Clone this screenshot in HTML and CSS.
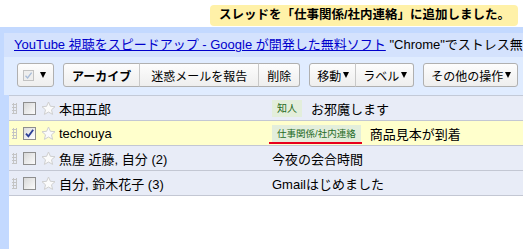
FILE: index.html
```html
<!DOCTYPE html>
<html lang="ja">
<head>
  <meta charset="UTF-8">
  <meta name="viewport" content="width=device-width, initial-scale=1.0">
  <title>Gmail</title>
  <link rel="stylesheet" href="styles.css">
</head>
<body>
  <div class="notice">
    <span class="notice-text">スレッドを「仕事関係/社内連絡」に追加しました。</span>
  </div>

  <div class="main">
    <div class="ad">
      <a href="#">YouTube 視聴をスピードアップ - Google が開発した無料ソフト</a> "Chrome"でストレス無
    </div>

    <div class="toolbar">
      <button class="btn btn-select">
        <span class="mini-check">
          <svg width="9" height="9" viewBox="0 0 9 9"><path d="M1.5 4.8 L3.6 7 L7.6 1.6" fill="none" stroke="#a8bcd8" stroke-width="1.3"/></svg>
        </span>
        <span class="arrow"></span>
      </button>
      <div class="group">
        <button class="btn bold">アーカイブ</button>
        <button class="btn btn-wide">迷惑メールを報告</button>
        <button class="btn">削除</button>
      </div>
      <div class="group">
        <button class="btn btn-menu">移動<span class="arrow"></span></button>
        <button class="btn btn-menu">ラベル<span class="arrow"></span></button>
      </div>
      <div class="group">
        <button class="btn btn-menu">その他の操作<span class="arrow"></span></button>
      </div>
    </div>

    <div class="list">
      <div class="row">
        <span class="grip"></span>
        <span class="check"></span>
        <svg class="star" width="15" height="15" viewBox="0 0 15 15"><path d="M7.5 1 L9.4 5.3 L14 5.7 L10.5 8.8 L11.6 13.4 L7.5 11 L3.4 13.4 L4.5 8.8 L1 5.7 L5.6 5.3 Z" fill="#fbfbfb" stroke="#cfcfcf"/></svg>
        <span class="sender">本田五郎</span>
        <span class="subject"><span class="chip">知人</span>お邪魔します</span>
      </div>
      <div class="row selected">
        <span class="grip"></span>
        <span class="check checked">
          <svg width="11" height="11" viewBox="0 0 11 11"><path d="M2 5.6 L4.4 8.4 L9.2 1.8" fill="none" stroke="#2b3f95" stroke-width="1.8"/></svg>
        </span>
        <svg class="star" width="15" height="15" viewBox="0 0 15 15"><path d="M7.5 1 L9.4 5.3 L14 5.7 L10.5 8.8 L11.6 13.4 L7.5 11 L3.4 13.4 L4.5 8.8 L1 5.7 L5.6 5.3 Z" fill="#fbfbfb" stroke="#cfcfcf"/></svg>
        <span class="sender">techouya</span>
        <span class="subject"><span class="chip chip-small">仕事関係/社内連絡<span class="mark"></span></span>商品見本が到着</span>
      </div>
      <div class="row">
        <span class="grip"></span>
        <span class="check"></span>
        <svg class="star" width="15" height="15" viewBox="0 0 15 15"><path d="M7.5 1 L9.4 5.3 L14 5.7 L10.5 8.8 L11.6 13.4 L7.5 11 L3.4 13.4 L4.5 8.8 L1 5.7 L5.6 5.3 Z" fill="#fbfbfb" stroke="#cfcfcf"/></svg>
        <span class="sender">魚屋 近藤, 自分 (2)</span>
        <span class="subject">今夜の会合時間</span>
      </div>
      <div class="row">
        <span class="grip"></span>
        <span class="check"></span>
        <svg class="star" width="15" height="15" viewBox="0 0 15 15"><path d="M7.5 1 L9.4 5.3 L14 5.7 L10.5 8.8 L11.6 13.4 L7.5 11 L3.4 13.4 L4.5 8.8 L1 5.7 L5.6 5.3 Z" fill="#fbfbfb" stroke="#cfcfcf"/></svg>
        <span class="sender">自分, 鈴木花子 (3)</span>
        <span class="subject">Gmailはじめました</span>
      </div>
    </div>
  </div>
</body>
</html>
```

FILE: styles.css
```css
* {margin: 0; padding: 0; box-sizing: border-box;}

html, body {
  width: 523px;
  height: 249px;
  overflow: hidden;
}
body {
  display: flex;
  flex-direction: column;
  background: #fff;
  font-family: "Liberation Sans", "Noto Sans CJK JP", sans-serif;
  font-size: 13px;
  color: #000;
}

/* 上の黄色いお知らせ */
.notice {
  height: 27px;
  padding: 5px 0 0 210px;
  white-space: nowrap;
}
.notice-text {
  display: inline-block;
  height: 21px;
  line-height: 21px;
  padding: 0 8px 0 9px;
  background: #fff1a8;
  border-radius: 4px;
  font-size: 12.5px;
  font-weight: bold;
}

.main {
  flex: 1;
  display: flex;
  flex-direction: column;
  background: #c3d9ff;
  padding-top: 6px;
}

.ad {
  height: 24px;
  line-height: 24px;
  margin-left: 4px;
  padding-left: 10px;
  background: #d4e2fd;
  font-size: 13px;
  white-space: nowrap;
}
.ad a {
  color: #0000cc;
}

/* ボタン */
.toolbar {
  display: flex;
  gap: 9px;
  height: 38px;
  margin-left: 4px;
  padding: 6px 0 0 13px;
  background: #e0ecff;
  white-space: nowrap;
}
.group {
  display: flex;
  flex-shrink: 0;
}
.btn {
  display: flex;
  align-items: center;
  flex-shrink: 0;
  height: 24px;
  padding: 0 8px;
  border: 1px solid #b0b0b0;
  border-radius: 3px;
  background: linear-gradient(#fdfdfd, #eeeeee);
  font-family: inherit;
  font-size: 12px;
  color: #000;
}
.btn-wide {
  padding: 0 11px;
}
.btn-menu {
  padding: 0 6px 0 7px;
}
.group .btn {
  border-radius: 0;
}
.group .btn + .btn {
  border-left: 1px solid #c8c8c8;
  margin-left: -1px;
}
.group .btn:first-child {
  border-radius: 3px 0 0 3px;
}
.group .btn:last-child {
  border-radius: 0 3px 3px 0;
}
.group .btn:only-child {
  border-radius: 3px;
}
.bold {
  font-weight: bold;
}
/* ▼ */
.arrow {
  width: 0;
  height: 0;
  margin-left: 2px;
  border-left: 3.5px solid transparent;
  border-right: 3.5px solid transparent;
  border-top: 6px solid #000;
}
.btn-select {
  width: 37px;
  padding: 0 0 0 5px;
}
.mini-check {
  display: flex;
  align-items: center;
  justify-content: center;
  width: 11px;
  height: 11px;
  border: 1px solid #c2c2c2;
  background: #eeeeee;
}
.btn-select .arrow {
  margin-left: 6px;
}

/* メール一覧 */
.list {
  flex: 1;
  margin-left: 9px;
  background: #fff;
  border-top: 1px solid #c3cad8;
}
.row {
  display: flex;
  align-items: center;
  height: 25px;
  padding-left: 3px;
  background: #e8ecf7;
  border-bottom: 1px solid #c3c7d3;
  white-space: nowrap;
}
.row.selected {
  background: #ffffcc;
}
.grip {
  width: 5px;
  height: 11px;
  background-image: radial-gradient(circle, #c4c4c4 1px, transparent 1.2px);
  background-size: 3px 3px;
}
.check {
  display: flex;
  align-items: center;
  justify-content: center;
  width: 13px;
  height: 13px;
  margin-left: 6px;
  border: 1px solid #8e8e8e;
  background: linear-gradient(135deg, #d8d8d8, #fbfbfb);
}
.check.checked {
  background: linear-gradient(135deg, #dcdcdc, #fff);
}
.star {
  margin-left: 5px;
}
.sender {
  width: 213px;
  margin-left: 3px;
}
.subject {
  display: flex;
  align-items: center;
}
.chip {
  position: relative;
  height: 17px;
  line-height: 17px;
  margin-right: 9px;
  padding: 0 5px;
  background: #e3eedb;
  color: #1f6b1f;
  font-size: 10px;
}
.chip-small {
  font-size: 9.5px;
}
/* 赤い下線 */
.mark {
  position: absolute;
  left: -3px;
  right: -1px;
  bottom: -2px;
  height: 2px;
  background: #e8001c;
}
```
